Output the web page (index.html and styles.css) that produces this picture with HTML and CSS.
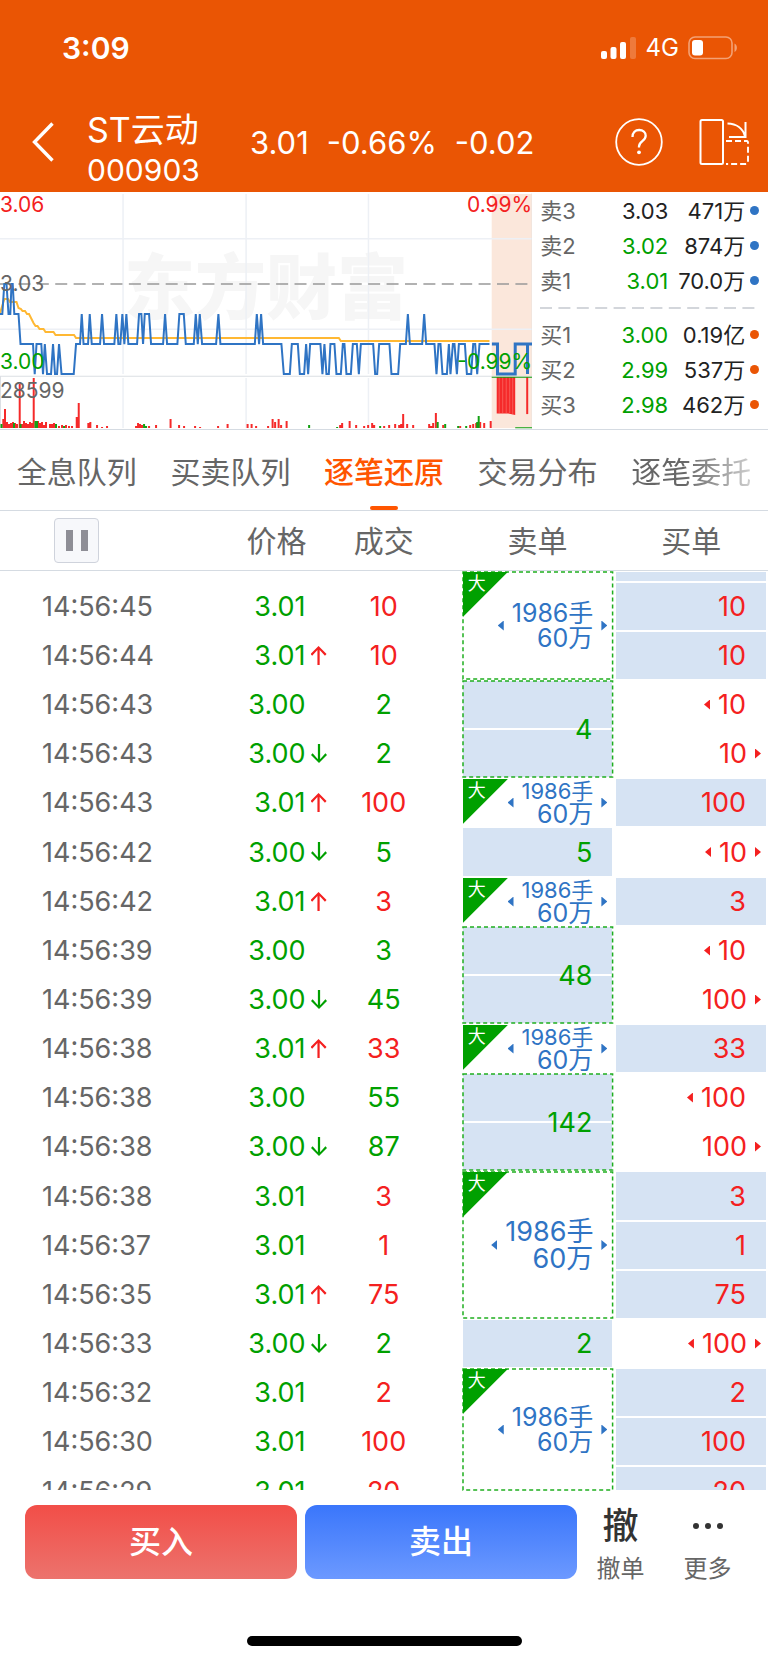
FILE: index.html
```
<!DOCTYPE html>
<html lang="zh-CN">
<head>
<meta charset="utf-8">
<meta name="viewport" content="width=device-width, initial-scale=1">
<title>ST云动 000903</title>
<link rel="stylesheet" href="styles.css">
</head>
<body>
<header class="top">
  <div class="status">
    <span class="clock">3:09</span>
    <span class="status-right">
      <svg width="36" height="23" viewBox="0 0 36 23" fill="#fff" aria-hidden="true"><rect x="0" y="14" width="6" height="8" rx="2"/><rect x="9.500" y="10" width="6" height="12" rx="2"/><rect x="19" y="5" width="6" height="17" rx="2"/><rect x="29" y="0" width="6" height="22" rx="2" opacity=".22"/></svg>
      <span class="net">4G</span>
      <svg width="50" height="24" viewBox="0 0 50 24" aria-hidden="true"><rect x="1" y="1" width="43" height="21.500" rx="6" fill="none" stroke="#fff" stroke-opacity=".45" stroke-width="1.600"/><rect x="4" y="4" width="11" height="15.500" rx="3" fill="#fff"/><path d="M46.500 7.500c3.200 1.500 3.200 7 0 8.500z" fill="#fff" fill-opacity=".45"/></svg>
    </span>
  </div>
  <div class="nav">
    <button class="icon-btn back" aria-label="返回"><svg width="22" height="40" viewBox="0 0 22 40" fill="none" stroke="#fff" stroke-width="3.400"><path d="M20.500 1.500 2.500 20 20.500 38.500"/></svg></button>
    <h1 class="stock"><span>ST云动</span><span class="code">000903</span></h1>
    <p class="quote"><span>3.01</span><span>-0.66%</span><span>-0.02</span></p>
    <button class="icon-btn help" aria-label="帮助"><svg width="48" height="48" viewBox="0 0 48 48" fill="none" stroke="#fff"><circle cx="24" cy="24" r="22.800" stroke-width="1.800"/><path d="M17.500 19c0-4.500 2.800-7 6.700-7 3.800 0 6.500 2.400 6.500 5.800 0 5.200-6.700 5.600-6.700 10.700v1" stroke-width="2.300"/><circle cx="24" cy="34.300" r="1.900" fill="#fff" stroke="none"/></svg></button>
    <button class="icon-btn" aria-label="横屏"><svg width="52" height="48" viewBox="0 0 52 48" fill="none" stroke="#fff" stroke-width="2"><rect x="1.500" y="2" width="22.500" height="44" rx="1.500"/><path d="M28.500 5.500c9 .2 15.500 5 17.500 13M46.500 4v15M30 19h17.500"/><path d="M27 23H48a1.500 1.500 0 0 1 1 1.500V44a2 2 0 0 1-2 2H27" stroke-dasharray="6 3" stroke-width="1.900"/></svg></button>
  </div>
</header>

<section class="market">
  <svg class="chart" viewBox="0 0 532 237" role="img" aria-label="分时走势">
    <text class="mark" x="124" y="121">东方财富</text>
    <rect x="491.500" y="2" width="40.500" height="234" fill="#fbe7db"/>
    <path class="grid" d="M0 46.700H532M0 137.300H532M123 2V182M246 2V182M368.300 2V182M123 186V236M246 186V236M368.300 186V236"/>
    <path class="edge" d="M0 184.300H532M532 1V237M0.500 184V236"/>
    <path d="M0 92H532" stroke="#999" stroke-width="1.600" stroke-dasharray="12 6.400"/>
    <path class="avg" d="M0 121 4.300 107H8L10 110H16.500L18.500 116 21 117 22.500 119H25L27 122H29L31 126 33.500 131 35.500 134H37.500L39.500 137H43.500L45.500 140H53.500L55.500 143H74L76 146H338.700L340.700 149H489.300"/>
    <path class="price" d="M0 122H2.300L4.300 92H6.500L8.500 122H10.300L11.500 92H12.700L14.300 122H18.500L20.500 152H33L34.700 182 36.500 152H41.300L43 182 44.800 152 47 182H51L53 152 55 182H57L59 152 61.500 182H73.700L76 152H80L81.700 122 83.500 152H88L89.700 122 91.700 152H100L102 122 104 152H114.300L116.300 122 118.300 152H120.300L122.300 122 124.300 152 126.300 122 128.300 152H137L139 122H141.300L143 152 144.700 122H149L151 152H163L165 122 167 152H177.300L179.300 122H183.700L185.700 152H193.700L195.700 122 197.700 152 199.700 122 202 152H216L218.300 122 220.300 152H254.700L256.700 122 259 152 261 122 263 152H281.300L283.700 182H289.700L291.700 152H297.700L299.700 182H304L306 152 308 182 310 152H320.300L322.300 182 324.300 152 326.300 182H328.700L330.300 152H334.300L336.300 182H340.700L342.700 152H344.300L346.300 182H350.700L352.700 152H356.700L358.700 182 360.700 152H373L375 182H377L379 152H389.300L391.300 182H398L400 152H405.700L407.700 122 409.700 152H422L424 122 426 152H434.300L436.300 182 438.300 152H440.300L442.300 182H446.700L448.700 152 450.300 182 452.700 152H454.300L456.700 182 458.700 152H464.700L466.700 182H471L473 152H475L477 182 479.300 152H489.300"/>
    <path class="price thick" d="M491.700 152H497.300V182H515V152H527.300V182 152H532"/>
    <path class="up" d="M3.300 236V227M5 236V217M7 236V230M9 236V232M11 236V231M13 236V230M15 236V231M17 236V232M19.700 236V192M22 236V232M24 236V229M26 236V231M28 236V232M30 236V230M32 236V231M33.700 236V186M38 236V229M40 236V231M42 236V230M44 236V233M46 236V230M50 236V232M52 236V232M54 236V231M59 236V234M62 236V233M66 236V233M69 236V234M72 236V234M76.700 236V225M78.700 236V211M88.300 236V231M90.300 236V230M97 236V233M102 236V235M107 236V234M136 236V234M138 236V231M140 236V232M142 236V233M149 236V234M156 236V233M170.500 236V227M179 236V233M184 236V234M195 236V234M200 236V235M218 236V234M227.500 236V232M247.500 236V232M251.500 236V232M256 236V234M268 236V234M272.500 236V227M275 236V230M278.500 236V227M281 236V233M286.500 236V229M340 236V233M342 236V231M349.500 236V229M356 236V233M364 236V234M368 236V233M372 236V231M374 236V233M384 236V234M389 236V233M395 236V232M399 236V233M401 236V232M403 236V222M407 236V232M413 236V233M429 236V232M431 236V234M433 236V231M435.700 236V221M443 236V233M460 236V234M470 236V233M473 236V232M476 236V231M480 236V230M484 236V231M490.500 236V229"/>
    <path class="down" d="M1.500 236V232M14 236V231M20.500 236V232M35.500 236V229M37 236V229M56 236V232M64 236V234M144 236V232M146 236V234M309 236V233M337 236V235M380 236V234M437.500 236V230M445 236V232M458 236V234M466 236V234M478.500 236V224M477 236V230"/>
    <path class="up" d="M527 185V222"/>
    <path d="M496.500 185H515V223L508 221.500H496.500Z" fill="#f52a2a"/>
    <path d="M499 185V221M502.500 185V221M506 185V221M509.500 185V221M512.500 185V222" stroke="#fb7a72" stroke-width=".6"/>
    <path d="M491.500 185.200H532M515 235.700H532" stroke="#12a012" stroke-width="1" fill="none"/>
    <text class="lbl red" x="0" y="20">3.06</text>
    <text class="lbl" x="0" y="99">3.03</text>
    <text class="lbl green" x="0" y="177">3.00</text>
    <text class="lbl" x="0" y="206">28599</text>
    <text class="lbl red end" x="532" y="20">0.99%</text>
    <text class="lbl green end" x="532" y="177">-0.99%</text>
  </svg>
  <div class="book">
    <dl class="quotes ask">
      <div><dt>卖3</dt><dd>3.03</dd><dd class="amt">471万</dd></div>
      <div><dt>卖2</dt><dd class="green">3.02</dd><dd class="amt">874万</dd></div>
      <div><dt>卖1</dt><dd class="green">3.01</dd><dd class="amt">70.0万</dd></div>
    </dl>
    <svg class="rule" height="19" aria-hidden="true"><path d="M0 10H215" stroke="#d3d6db" stroke-width="2" stroke-dasharray="12 6.400"/></svg>
    <dl class="quotes bid">
      <div><dt>买1</dt><dd class="green">3.00</dd><dd class="amt">0.19亿</dd></div>
      <div><dt>买2</dt><dd class="green">2.99</dd><dd class="amt">537万</dd></div>
      <div><dt>买3</dt><dd class="green">2.98</dd><dd class="amt">462万</dd></div>
    </dl>
  </div>
</section>

<nav class="tabs">
  <a href="#queue">全息队列</a>
  <a href="#orders">买卖队列</a>
  <a href="#restore" class="active" aria-current="page">逐笔还原</a>
  <a href="#dist">交易分布</a>
  <a href="#entrust" class="fade">逐笔委托</a>
</nav>

<main class="list">
<table class="ticks">
  <colgroup><col class="c-time"><col class="c-price"><col class="c-vol"><col class="c-sell"><col class="c-buy"></colgroup>
  <thead>
    <tr>
      <th><button class="pause" aria-label="暂停"><i></i><i></i></button></th>
      <th>价格</th><th class="vol">成交</th><th>卖单</th><th>买单</th>
    </tr>
  </thead>
  <tbody>
    <tr class="head-cut"><td></td><td></td><td></td>
      <td rowspan="3" class="cell big"><svg class="dash"><rect width="100%" height="100%"/></svg><b class="tag">大</b><div class="num"><i class="l"></i><span>1986手<br>60万</span><i class="r"></i></div></td>
      <td class="cell fill"></td></tr>
    <tr><td class="time">14:56:45</td><td class="price-cell">3.01</td><td class="vol red">10</td>
      <td class="cell fill buy"><div class="num"><span>10</span></div></td></tr>
    <tr><td class="time">14:56:44</td><td class="price-cell up-to">3.01</td><td class="vol red">10</td>
      <td class="cell fill buy"><div class="num"><span>10</span></div></td></tr>
    <tr><td class="time">14:56:43</td><td class="price-cell">3.00</td><td class="vol green">2</td>
      <td rowspan="2" class="cell fill split sell"><svg class="dash"><rect width="100%" height="100%"/></svg><div class="num"><span>4</span></div></td>
      <td class="cell buy"><div class="num"><i class="l"></i><span>10</span></div></td></tr>
    <tr><td class="time">14:56:43</td><td class="price-cell down-to">3.00</td><td class="vol green">2</td>
      <td class="cell buy"><div class="num"><span>10</span><i class="r"></i></div></td></tr>
    <tr><td class="time">14:56:43</td><td class="price-cell up-to">3.01</td><td class="vol red">100</td>
      <td class="cell big one"><b class="tag">大</b><div class="num"><i class="l"></i><span><small>1986手</small><br>60万</span><i class="r"></i></div></td>
      <td class="cell fill buy"><div class="num"><span>100</span></div></td></tr>
    <tr><td class="time">14:56:42</td><td class="price-cell down-to">3.00</td><td class="vol green">5</td>
      <td class="cell fill sell"><div class="num"><span>5</span></div></td>
      <td class="cell buy"><div class="num"><i class="l"></i><span>10</span><i class="r"></i></div></td></tr>
    <tr><td class="time">14:56:42</td><td class="price-cell up-to">3.01</td><td class="vol red">3</td>
      <td class="cell big one"><b class="tag">大</b><div class="num"><i class="l"></i><span><small>1986手</small><br>60万</span><i class="r"></i></div></td>
      <td class="cell fill buy"><div class="num"><span>3</span></div></td></tr>
    <tr><td class="time">14:56:39</td><td class="price-cell">3.00</td><td class="vol green">3</td>
      <td rowspan="2" class="cell fill split sell"><svg class="dash"><rect width="100%" height="100%"/></svg><div class="num"><span>48</span></div></td>
      <td class="cell buy"><div class="num"><i class="l"></i><span>10</span></div></td></tr>
    <tr><td class="time">14:56:39</td><td class="price-cell down-to">3.00</td><td class="vol green">45</td>
      <td class="cell buy"><div class="num"><span>100</span><i class="r"></i></div></td></tr>
    <tr><td class="time">14:56:38</td><td class="price-cell up-to">3.01</td><td class="vol red">33</td>
      <td class="cell big one"><b class="tag">大</b><div class="num"><i class="l"></i><span><small>1986手</small><br>60万</span><i class="r"></i></div></td>
      <td class="cell fill buy"><div class="num"><span>33</span></div></td></tr>
    <tr><td class="time">14:56:38</td><td class="price-cell">3.00</td><td class="vol green">55</td>
      <td rowspan="2" class="cell fill split sell"><svg class="dash"><rect width="100%" height="100%"/></svg><div class="num"><span>142</span></div></td>
      <td class="cell buy"><div class="num"><i class="l"></i><span>100</span></div></td></tr>
    <tr><td class="time">14:56:38</td><td class="price-cell down-to">3.00</td><td class="vol green">87</td>
      <td class="cell buy"><div class="num"><span>100</span><i class="r"></i></div></td></tr>
    <tr><td class="time">14:56:38</td><td class="price-cell">3.01</td><td class="vol red">3</td>
      <td rowspan="3" class="cell big wide"><svg class="dash"><rect width="100%" height="100%"/></svg><b class="tag">大</b><div class="num"><i class="l"></i><span>1986手<br>60万</span><i class="r"></i></div></td>
      <td class="cell fill buy"><div class="num"><span>3</span></div></td></tr>
    <tr><td class="time">14:56:37</td><td class="price-cell">3.01</td><td class="vol red">1</td>
      <td class="cell fill buy"><div class="num"><span>1</span></div></td></tr>
    <tr><td class="time">14:56:35</td><td class="price-cell up-to">3.01</td><td class="vol red">75</td>
      <td class="cell fill buy"><div class="num"><span>75</span></div></td></tr>
    <tr><td class="time">14:56:33</td><td class="price-cell down-to">3.00</td><td class="vol green">2</td>
      <td class="cell fill sell"><div class="num"><span>2</span></div></td>
      <td class="cell buy"><div class="num"><i class="l"></i><span>100</span><i class="r"></i></div></td></tr>
    <tr><td class="time">14:56:32</td><td class="price-cell">3.01</td><td class="vol red">2</td>
      <td rowspan="3" class="cell big"><svg class="dash"><rect width="100%" height="100%"/></svg><b class="tag">大</b><div class="num"><i class="l"></i><span>1986手<br>60万</span><i class="r"></i></div></td>
      <td class="cell fill buy"><div class="num"><span>2</span></div></td></tr>
    <tr><td class="time">14:56:30</td><td class="price-cell">3.01</td><td class="vol red">100</td>
      <td class="cell fill buy"><div class="num"><span>100</span></div></td></tr>
    <tr class="foot-cut"><td class="time"><div class="clip">14:56:29</div></td><td class="price-cell"><div class="clip">3.01</div></td><td class="vol red"><div class="clip">20</div></td>
      <td class="cell fill buy"><div class="clip num"><span>20</span></div></td></tr>
  </tbody>
</table>
</main>

<footer class="actions">
  <div class="bar">
    <button class="trade buy-btn">买入</button>
    <button class="trade sell-btn">卖出</button>
    <button class="tool"><span class="glyph">撤</span><span>撤单</span></button>
    <button class="tool"><svg class="glyph" width="32" height="36" viewBox="0 0 32 36" fill="#333" aria-hidden="true"><circle cx="4" cy="18" r="3"/><circle cx="16" cy="18" r="3"/><circle cx="28" cy="18" r="3"/></svg><span>更多</span></button>
  </div>
  <div class="home"></div>
</footer>
</body>
</html>
```
FILE: styles.css
```
* { box-sizing: border-box; }

body {
  margin: 0;
  min-height: 100vh;
  display: flex;
  flex-direction: column;
  background: #fff;
  color: #666;
  font-family: Inter, "Noto Sans CJK SC", sans-serif;
  font-size: 27px;
  line-height: 1;
}

button {
  border: 0;
  padding: 0;
  background: none;
  color: inherit;
  font: inherit;
}

svg { display: block; }
.red { color: #f42020; fill: #f42020; }
.green { color: #00a000; fill: #00a000; }

/* header */
.top { background: #ea5504; color: #fff; }
.status {
  display: flex;
  justify-content: space-between;
  align-items: center;
  height: 96px;
  padding: 0 30px 0 62px;
}
.clock { font-size: 30px; font-weight: 600; }
.status-right { display: flex; align-items: center; gap: 9px; }
.net { font-size: 24px; }

.nav {
  display: flex;
  align-items: center;
  height: 96px;
  padding: 0 17px 4px 32px;
}
.icon-btn { flex: none; }
.stock {
  margin: 0 0 0 33px;
  width: 163px;
  font-size: 34px;
  font-weight: 400;
  display: flex;
  flex-direction: column;
  gap: 8px;
  padding-top: 14px;
}
.code { font-size: 30px; }
.quote {
  flex: 1;
  margin: 0;
  display: flex;
  gap: 18px;
  font-size: 31px;
}
.help { margin-right: 36px; }

/* chart and order book */
.market {
  display: flex;
  border-bottom: 1px solid #d5dbe2;
}
.chart { flex: none; width: 69.3%; height: auto; }
.grid { stroke: #edf0f5; stroke-width: 1.5; fill: none; }
.edge { stroke: #dcdfe4; stroke-width: 1; fill: none; }
.avg { stroke: #ffb833; stroke-width: 2; fill: none; }
.price { stroke: #2f74c4; stroke-width: 2; fill: none; }
.thick { stroke-width: 3; }
.up { stroke: #f52a2a; stroke-width: 2; fill: none; }
.down { stroke: #12a012; stroke-width: 2; fill: none; }
.mark { font-size: 71px; font-weight: 900; fill: #f6f6f6; }
.lbl { font-size: 21px; }
.lbl:not(.red):not(.green) { fill: #666; }
.end { text-anchor: end; }

.book { flex: 1; min-width: 0; padding: 1px 0 0 8px; }
.quotes { margin: 0; font-size: 22px; color: #222; }
.quotes div { display: flex; align-items: center; height: 35px; }
.quotes dt { width: 52px; color: #666; }
.quotes dd { margin: 0; width: 76px; text-align: right; white-space: nowrap; }
.quotes .amt { width: 77px; }
.quotes div::after {
  content: "";
  width: 9px;
  height: 9px;
  margin-left: 5px;
  border-radius: 50%;
  background: #2f74c4;
}
.bid div::after { background: #ea5504; }
.rule { width: 100%; }

/* tabs */
.tabs {
  display: flex;
  height: 81px;
  border-bottom: 1px solid #d5dbe2;
  font-size: 30px;
}
.tabs a {
  flex: 1;
  display: flex;
  justify-content: center;
  align-items: center;
  padding-top: 4px;
  position: relative;
  color: #666;
  text-decoration: none;
  white-space: nowrap;
}
.tabs .active { color: #ff5500; font-weight: 500; }
.tabs .active::after {
  content: "";
  position: absolute;
  left: 50%;
  bottom: 0;
  width: 28px;
  height: 4px;
  margin-left: -14px;
  border-radius: 2px;
  background: #ff5500;
}
.tabs .fade {
  color: transparent;
  background: linear-gradient(90deg, #666 45%, #ddd 95%);
  background-clip: text;
}

/* tick table */
.list { flex: 1; }
.ticks {
  width: 100%;
  table-layout: fixed;
  border-collapse: separate;
  border-spacing: 0;
}
.c-time { width: 30%; }
.c-price { width: 12%; }
.c-vol { width: 18%; }
.c-sell, .c-buy { width: 20%; }

th {
  height: 60px;
  padding: 0;
  border-bottom: 1px solid #d5dbe2;
  font-size: 30px;
  font-weight: 400;
}
.pause {
  display: flex;
  justify-content: center;
  align-items: center;
  gap: 8px;
  width: 45px;
  height: 45px;
  margin-left: 54px;
  border: 1px solid #cfd3dc;
  border-radius: 4px;
  background: #f7f8fb;
}
.pause i { width: 7px; height: 21px; background: #8e8e96; }

td { height: 49px; padding: 0; white-space: nowrap; }
tr:nth-child(7n) td { height: 50px; }
.head-cut td { height: 11px; }
.foot-cut td { height: 25px; }
.clip { height: 23px; line-height: 49px; overflow: hidden; }
.time { padding-left: 42px; }
.vol { text-align: center; padding-right: 16px; }

.price-cell {
  color: #00a000;
  text-align: right;
  padding-right: 17px;
  position: relative;
}
/* direction arrow beside the price */
.up-to::after, .down-to::after {
  content: "";
  position: absolute;
  right: -4px;
  top: 15px;
  width: 16px;
  height: 19px;
  background: #f42020;
  clip-path: polygon(50% 0, 100% 42%, 90% 51%, 57% 20%, 57% 100%, 43% 100%, 43% 20%, 10% 51%, 0 42%);
}
.down-to::after { background: #00a000; transform: rotate(180deg); }

.cell {
  position: relative;
  border: solid transparent;
  border-width: 1px 2px;
  background-clip: padding-box;
}
.fill { background-color: #d6e3f3; }
.split {
  background-image: linear-gradient(transparent calc(50% - 1px), #fff calc(50% - 1px), #fff calc(50% + 1px), transparent calc(50% + 1px));
}
.sell { color: #00a000; }
.buy { color: #f42020; }
.big { color: #2f74c4; font-size: 25px; line-height: 25px; }
.wide { font-size: 27px; line-height: 27px; }
.one { line-height: 23px; }
.one small { font-size: 22px; }

.num {
  display: flex;
  justify-content: flex-end;
  align-items: center;
  gap: 8px;
  padding-right: 20px;
  text-align: right;
}
.num:has(.r) { padding-right: 5px; }
.num.clip { align-items: flex-start; }
.num i {
  width: 6px;
  height: 10px;
  background: currentColor;
}
.num .l { clip-path: polygon(100% 0, 100% 100%, 0 50%); }
.num .r { clip-path: polygon(0 0, 100% 50%, 0 100%); }

.dash {
  position: absolute;
  inset: 0;
  width: 100%;
  height: 100%;
  overflow: visible;
}
.dash rect {
  fill: none;
  stroke: #1fae1f;
  stroke-width: 1.5;
  stroke-dasharray: 4 3;
}
.tag {
  position: absolute;
  left: 0;
  top: 0;
  width: 45px;
  height: 45px;
  padding: 3px 0 0 5px;
  background: #00a000;
  clip-path: polygon(0 0, 100% 0, 0 100%);
  color: #fff;
  font-size: 18px;
  font-weight: 400;
  line-height: 18px;
}

/* bottom bar */
.actions {
  height: 172px;
  padding-top: 14px;
  display: flex;
  flex-direction: column;
  justify-content: space-between;
  align-items: center;
}
.bar { display: flex; width: 100%; padding: 0 17px 0 25px; }
.trade {
  flex: 1;
  height: 74px;
  border-radius: 12px;
  color: #fff;
  font-size: 32px;
  font-weight: 500;
}
.buy-btn { background: linear-gradient(#f24e48, #ec736d); }
.sell-btn { margin-left: 8px; background: linear-gradient(#3a76fb, #6c99ff); }
.tool {
  width: 87px;
  height: 76px;
  padding-top: 3px;
  display: flex;
  flex-direction: column;
  align-items: center;
  justify-content: space-between;
  font-size: 24px;
}
.tool .glyph { color: #333; font-size: 36px; font-weight: 500; }
.home {
  width: 275px;
  height: 10px;
  margin-bottom: 17px;
  border-radius: 5px;
  background: #000;
}
```
